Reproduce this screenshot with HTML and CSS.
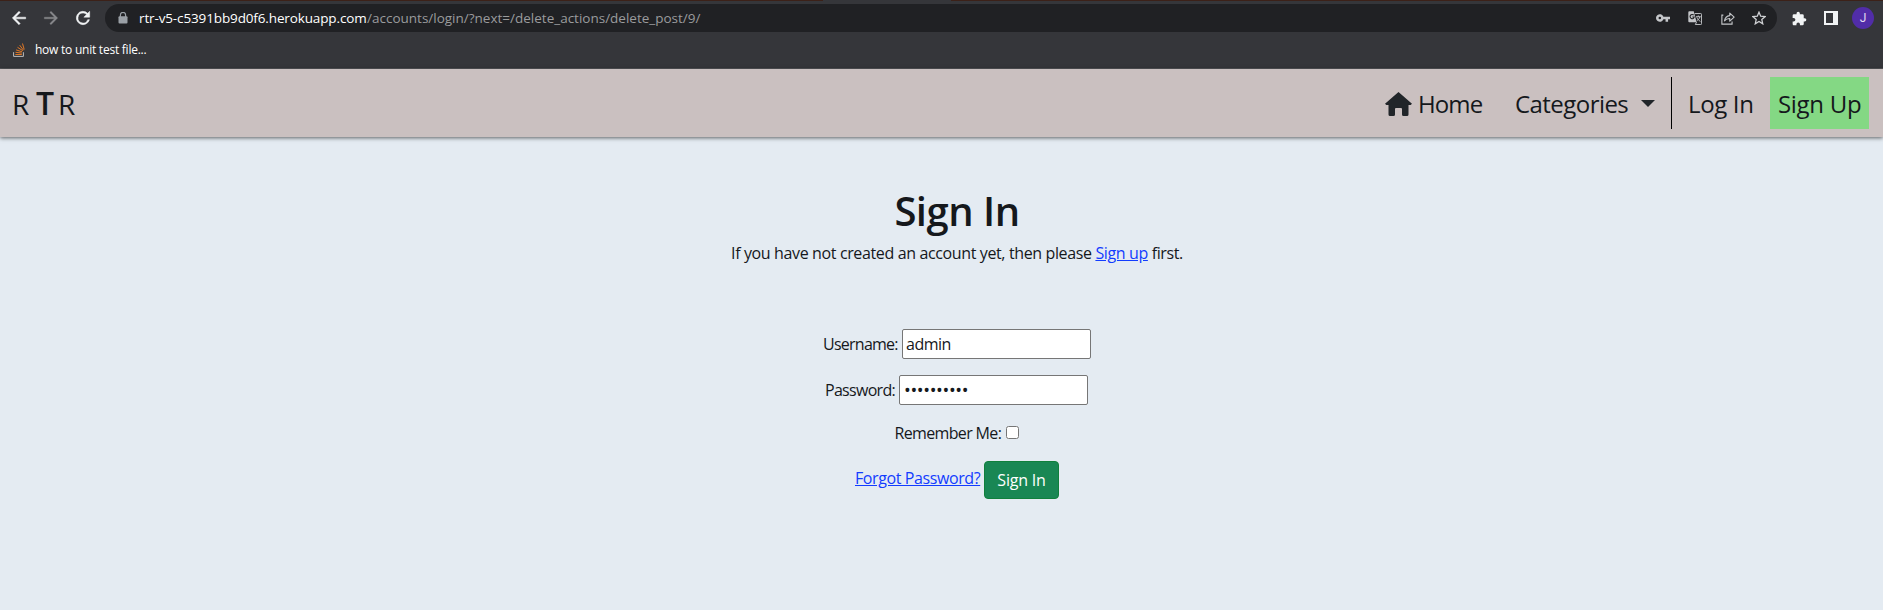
FILE: index.html
```html
<!DOCTYPE html>
<html lang="en">
<head>
<meta charset="utf-8">
<title>Sign In</title>
<link rel="stylesheet" href="styles.css">
</head>
<body>
<div class="chrome">
  <div class="tab-edge"><span class="edge-left"></span><span class="edge-gap"></span><span class="edge-right"></span></div>
  <div class="toolbar">
    <svg class="nav-icon" viewBox="0 0 24 24" fill="#f1f3f4"><path d="M20 11H7.8l5.6-5.6L12 4l-8 8 8 8 1.4-1.4L7.8 13H20z" stroke="#f1f3f4" stroke-width=".6"/></svg>
    <svg class="nav-icon" viewBox="0 0 24 24" fill="#88898c"><path d="M4 11h12.2l-5.6-5.6L12 4l8 8-8 8-1.4-1.4 5.6-5.6H4z" stroke="#88898c" stroke-width=".4"/></svg>
    <svg class="nav-icon" viewBox="0 0 24 24" fill="#f1f3f4"><path d="M17.65 6.35A8 8 0 1 0 19.73 14h-2.08A6 6 0 1 1 12 6c1.66 0 3.14.69 4.22 1.78L13 11h7V4z" stroke="#f1f3f4" stroke-width=".6"/></svg>
    <div class="omnibox">
      <svg class="lock" viewBox="0 0 10 12"><path d="M2.4 5V3a2.6 2.6 0 0 1 5.2 0v2" fill="none" stroke="#9aa0a6" stroke-width="1.2"/><rect x=".5" y="4.2" width="9" height="7.3" rx="1" fill="#9aa0a6"/></svg>
      <span class="domain">rtr-v5-c5391bb9d0f6.herokuapp.com</span><span class="path">/accounts/login/?next=/delete_actions/delete_post/9/</span>
      <div class="omni-icons">
        <svg viewBox="1 1 22 22" fill="#c4c6c9"><path d="M12.65 10a6 6 0 1 0 0 4H16v4h4v-4h3v-4zM7 14a2 2 0 1 1 0-4 2 2 0 0 1 0 4z"/></svg>
        <svg viewBox="1 1 22 22" fill="none"><path d="M3 1.500h7l4.500 17H3A1.500 1.500 0 0 1 1.500 17V3A1.500 1.500 0 0 1 3 1.500z" fill="#c4c6c9"/><path d="M11.500 5H21a1.300 1.300 0 0 1 1.300 1.300V21a1.300 1.300 0 0 1-1.300 1.300h-8.500l2-3.800" stroke="#c4c6c9" stroke-width="1.500"/><path d="M10 7.600a3.300 3.300 0 1 0 .8 2.700H7.800" stroke="#202124" stroke-width="1.700"/><path d="M13.500 10H21m-3.800-2v2m2.500 0c-.7 3-2.700 5-5 6.500m.3-5.500c1 2.700 3 5 5.500 6.500" stroke="#c4c6c9" stroke-width="1.500"/></svg>
        <svg class="share" viewBox="0 0 24 24" fill="none" stroke="#c4c6c9" stroke-width="1.900"><path d="M4 7H1.500v15.500H19V18"/><path d="M6 17c.8-5.500 4-8.500 9-9V3.500l7.500 7L15 17.500V13c-4-.3-6.500 1-9 4z" stroke-linejoin="round"/></svg>
        <svg viewBox="1 1 22 22" fill="none" stroke="#d0d2d5" stroke-width="2"><path d="m12 2.800 2.700 6.400 6.900.6-5.200 4.600 1.500 6.800L12 17.600l-5.900 3.600 1.500-6.800-5.200-4.600 6.900-.6z"/></svg>
      </div>
    </div>
    <div class="tools">
      <svg viewBox="1 0 23 23" fill="#f1f3f4"><path d="M20.500 11H19V7a2 2 0 0 0-2-2h-4V3.500a2.500 2.500 0 0 0-5 0V5H4a2 2 0 0 0-2 2v3.800h1.500a2.700 2.700 0 0 1 0 5.400H2V20c0 1.100.9 2 2 2h3.800v-1.500a2.700 2.700 0 0 1 5.400 0V22H17a2 2 0 0 0 2-2v-4h1.500a2.500 2.500 0 0 0 0-5z"/></svg>
      <svg class="panel" viewBox="0 0 14 14"><path fill-rule="evenodd" fill="#f1f3f4" d="M0 0h14v14H0zM2 2v10h7V2z"/></svg>
      <span class="avatar">J</span>
    </div>
  </div>
  <div class="bookmarks">
    <svg class="so" viewBox="0 0 12 14" fill="none"><path d="M.6 9.200v4.200h9.800V9.200" stroke="#bcbbbb" stroke-width="1"/><path d="M2.400 11.500h6.400M2.500 9.300l6.300.8M3.100 6.900l6 1.900M4.500 4.300l5.300 3.400M6.700 2.200l3.800 5M9.500.5l1.700 6" stroke="#f48024" stroke-width=".9"/></svg>
    <span class="bm-text">how to unit test file...</span>
  </div>
</div>
<nav class="navbar">
  <a class="brand"><span>R</span><b>T</b><span>R</span></a>
  <div class="links">
    <a class="home"><svg viewBox="0 0 27 24" fill="#212529"><path d="M13.500 0 27 11.700l-1.300 1.300H23.500v9.500q0 1.500-1.500 1.500h-3.500q-1.500 0-1.500-1.500V17q0-1-1-1h-5q-1 0-1 1v5.500Q10 24 8.500 24H5q-1.500 0-1.500-1.500V13H1.300L0 11.700z"/></svg><span>Home</span></a>
    <a class="categories"><span>Categories</span><i class="caret"></i></a>
    <a class="login">Log In</a>
    <a class="signup">Sign Up</a>
  </div>
</nav>
<main class="content">
  <h1>Sign In</h1>
  <p class="intro">If you have not created an account yet, then please <a>Sign up</a> first.</p>
  <form class="form">
    <div class="field user"><label>Username:</label><input type="text" value="admin"></div>
    <div class="field pass"><label>Password:</label><input type="password" value="abcdefghij"></div>
    <div class="remember"><label>Remember Me:</label><input type="checkbox"></div>
    <div class="actions"><a class="forgot">Forgot Password?</a><button type="button">Sign In</button></div>
  </form>
</main>
</body>
</html>
```
FILE: styles.css
```css
* { box-sizing: border-box; }
body {
  margin: 0;
  height: 610px;
  overflow: hidden;
  background: #e4ebf2;
  color: #15181c;
  font: 16px/24px "Open Sans", "Noto Sans", sans-serif;
  white-space: nowrap;
}
svg { display: block; flex: none; }

.chrome { height: 69px; background: #35363a; border-bottom: 1px solid #55565a; }
.tab-edge { display: flex; height: 1px; }
.edge-left { width: 823px; background: #3c2118; }
.edge-gap { width: 128px; }
.edge-right { flex: 1; background: #3c2118; }
.toolbar { display: flex; align-items: center; height: 34px; padding-left: 9px; }
.nav-icon { width: 20px; height: 20px; margin-right: 12px; }
.omnibox {
  display: flex;
  align-items: center;
  width: 1672px;
  height: 28px;
  padding-left: 13px;
  border-radius: 14px;
  background: #202124;
  font-size: 13.5px;
}
.lock { width: 10px; height: 12px; margin-right: 11px; }
.domain { width: 228px; color: #fff; letter-spacing: -0.13px; }
.path { color: #9a9b9d; }
.omni-icons { display: flex; gap: 18px; margin-left: auto; padding-right: 11px; }
.omni-icons svg { width: 14px; height: 14px; }
.omni-icons .share { width: 16px; height: 14px; margin-right: -2px; }
.tools { display: flex; align-items: center; margin-left: 15px; }
.tools svg { width: 15px; height: 15px; }
.tools .panel { width: 14px; height: 14px; margin-left: 17px; }
.avatar {
  width: 22px;
  height: 22px;
  margin-left: 14px;
  border-radius: 50%;
  background: #512da8;
  color: #e3dcf3;
  font: 12px/22px Roboto, sans-serif;
  text-align: center;
}
.bookmarks { display: flex; align-items: center; height: 30px; padding-left: 13px; }
.so { width: 12px; height: 14px; }
.bm-text { margin-left: 10px; color: #fff; font-size: 12px; letter-spacing: -0.24px; }

.navbar {
  position: relative;
  display: flex;
  justify-content: space-between;
  align-items: flex-start;
  height: 68px;
  padding: 8px 14px 0 12px;
  background: #cac0c0;
  box-shadow: 0 1px 4px rgba(0, 0, 0, .6);
}
.brand { display: flex; align-items: baseline; font-size: 28px; line-height: 52px; }
.brand span { width: 24px; }
.brand b { width: 22px; font-size: 32px; font-weight: 600; }
.links { display: flex; height: 52px; font-size: 24px; line-height: 53px; }
.home { display: flex; width: 130px; letter-spacing: -0.9px; }
.home svg { width: 27px; height: 24px; margin: 15px 6px 0 0; }
.categories { display: flex; width: 157px; border-right: 1px solid #000; letter-spacing: -0.55px; }
.caret { height: 7px; margin: 23px 0 0 13px; border: 7px solid transparent; border-top-color: #212529; border-bottom: 0; }
.login { width: 98px; padding-left: 16px; letter-spacing: -0.35px; }
.signup { width: 99px; padding-left: 8px; background: #84d884; letter-spacing: -0.3px; }

.content { text-align: center; padding: 50px 0 0 31px; }
h1 { margin: 0; font-size: 40px; line-height: 48px; font-weight: 600; letter-spacing: -0.5px; }
.intro { margin: 6px 0 0; letter-spacing: -0.37px; }
a { color: inherit; }
.intro a, .forgot { color: #123cff; text-decoration: underline; }
.form { display: flex; flex-direction: column; align-items: center; margin-top: 64px; }
.field { display: flex; align-items: center; height: 30px; margin-bottom: 16px; }
.field label { width: 79px; text-align: left; letter-spacing: -0.75px; }
.pass label { width: 74px; margin-left: -1px; letter-spacing: -0.7px; }
.field input {
  width: 189px;
  height: 30px;
  padding: 1px 3px;
  border: 1px solid #767676;
  border-radius: 2px;
  background: #fff;
  color: inherit;
  font: inherit;
  letter-spacing: -0.5px;
}
.field input[type="password"] { padding-left: 4px; font-size: 18px; letter-spacing: -0.35px; }
.remember { display: flex; align-items: center; height: 24px; }
.remember label { width: 111px; margin-left: -1px; text-align: left; letter-spacing: -0.65px; }
.remember input { width: 13px; height: 13px; margin: 0 0 2px; }
.actions { display: flex; margin-top: 16px; }
.forgot { width: 129px; padding-top: 5px; text-align: left; letter-spacing: -0.4px; }
.actions button {
  width: 75px;
  height: 38px;
  padding: 0;
  border: 1px solid #10803c;
  border-radius: 4px;
  background: #198754;
  color: #fff;
  font: inherit;
  letter-spacing: -0.2px;
}
```
